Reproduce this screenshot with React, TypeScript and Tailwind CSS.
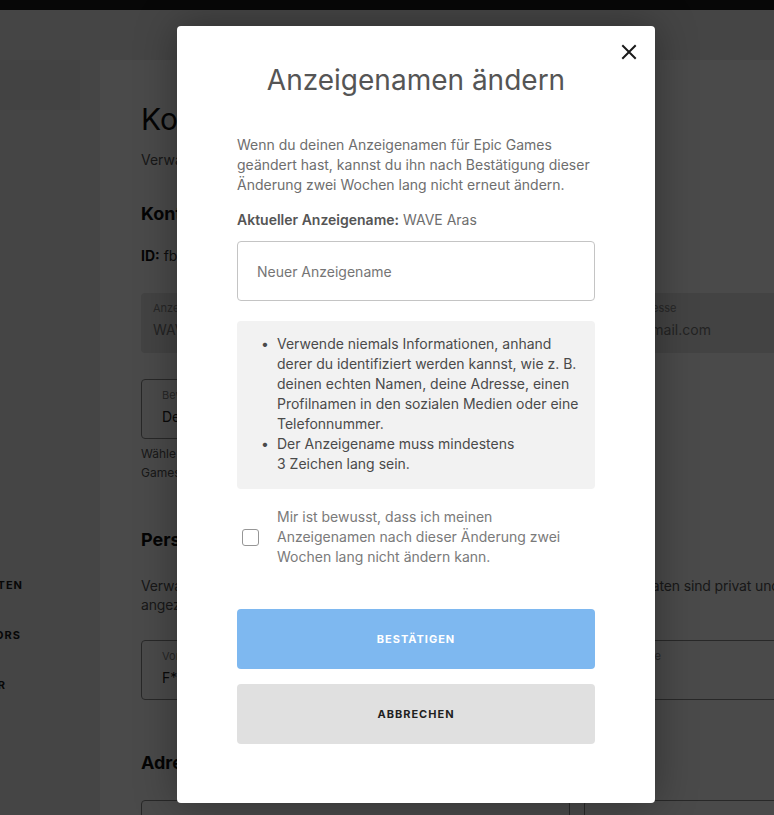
import React from "react";

const font = { fontFamily: "Inter, 'Noto Sans', sans-serif" };

function Field({ label, value, filled, className = "" }: { label: string; value: string; filled?: boolean; className?: string }) {
  return (
    <div
      className={
        "h-[60px] rounded-[4px] pt-[8px] flex flex-col " +
        (filled ? "bg-[#e6e6e6] text-[#7a7a7a] px-[12px] " : "border border-[#8a8a8a] text-[#222] px-[20px] ") +
        className
      }
    >
      {label && <span className="text-[11px] leading-[14px] text-[#888] whitespace-nowrap">{label}</span>}
      {value && <span className="text-[14px] leading-[20px] mt-[5px] whitespace-nowrap">{value}</span>}
    </div>
  );
}

const sideItems: { t: string; w: string }[] = [
  { t: "VERBUNDENE KONTEN", w: "w-[23px]" },
  { t: "SUPPORT-A-CREATORS", w: "w-[21px]" },
  { t: "EPIC-NEWSLETTER", w: "w-[6px]" },
];

export default function App() {
  return (
    <div className="relative w-[774px] h-[815px] overflow-hidden bg-[#ececec]" style={font}>
      {/* underlying page */}
      <div className="h-[10px] bg-[#1a1a1a]" />
      <div className="flex pt-[50px]">
        <aside className="w-[80px] shrink-0 flex flex-col">
          <div className="h-[50px] bg-[#e8e8e8]" />
          <div className="h-[468px]" />
          {sideItems.map((s) => (
            <div key={s.t} className={"h-[50px] flex justify-end overflow-hidden " + s.w}>
              <span className="whitespace-nowrap text-[11px] font-bold tracking-[1px] text-[#1a1a1a] leading-[14px]">{s.t}</span>
            </div>
          ))}
        </aside>
        <main className="ml-[20px] flex-1 bg-white pl-[41px] pt-[41px] min-w-0 overflow-hidden">
          <div className="w-[872px]">
            <h1 className="text-[30px] leading-[36px] text-[#111]">Kontoeinstellungen</h1>
            <p className="mt-[13px] text-[14px] leading-[20px] text-[#555]">Verwalte die Informationen deines Kontos.</p>
            <h2 className="mt-[32px] text-[18px] leading-[24px] font-bold text-[#111]">Kontoinformationen</h2>
            <p className="mt-[20px] text-[14px] leading-[20px] text-[#333]"><b className="text-[#111]">ID:</b> fb3c2a7e41d04b9a</p>
            <div className="mt-[27px] grid grid-cols-[429px_429px] gap-[14px]">
              <Field label="Anzeigename" value="WAVE Aras" filled />
              <Field label="E-Mail-Adresse" value="wa**@gmail.com" filled />
            </div>
            <div className="mt-[26px] w-[429px]">
              <Field label="Bevorzugte Kommunikationssprache" value="Deutsch" />
              <p className="mt-[5px] text-[12px] leading-[19px] text-[#555]">
                Wähle die Sprache, in der du E-Mails von Epic<br />Games erhalten möchtest.
              </p>
            </div>
            <h2 className="mt-[46px] text-[18px] leading-[24px] font-bold text-[#111]">Persönliche Details</h2>
            <p className="mt-[24px] text-[14px] leading-[19px] text-[#555] whitespace-nowrap tracking-[-0.15px]">
              Verwalte deinen Namen und deine Kontaktinformationen. Diese persönlichen Daten sind privat und werden
              <br />
              angezeigt.
            </p>
            <div className="mt-[26px] grid grid-cols-[429px_429px] gap-[14px]">
              <Field label="Vorname" value="F*****" />
              <Field label="Nachname" value="A****" />
            </div>
            <h2 className="mt-[51px] text-[18px] leading-[24px] font-bold text-[#111]">Adresse</h2>
            <div className="mt-[25px] grid grid-cols-[429px_429px] gap-[14px]">
              <Field label="" value="" />
              <Field label="" value="" />
            </div>
          </div>
        </main>
      </div>

      {/* dim overlay */}
      <div className="absolute inset-0 bg-black/[0.71]" />

      {/* modal */}
      <div className="absolute left-[177px] top-[26px] w-[478px] h-[777px] bg-white rounded-[4px] shadow-[0_0_40px_rgba(0,0,0,0.35)] px-[60px] pt-[36px]">
        <button className="absolute right-[18px] top-[18px] w-[16px] h-[16px] flex items-center justify-center" aria-label="Schließen">
          <svg width="16" height="16" viewBox="0 0 16 16">
            <path d="M2 2 L14 14 M14 2 L2 14" stroke="#1a1a1a" strokeWidth="2" strokeLinecap="square" />
          </svg>
        </button>
        <h1 className="text-center text-[28px] leading-[36px] text-[#555] font-normal">Anzeigenamen ändern</h1>
        <p className="mt-[37px] text-[14px] leading-[20px] text-[#6e6e6e]">
          Wenn du deinen Anzeigenamen für Epic Games
          <br />
          geändert hast, kannst du ihn nach Bestätigung dieser
          <br />
          Änderung zwei Wochen lang nicht erneut ändern.
        </p>
        <p className="mt-[15px] text-[14px] leading-[20px] text-[#6e6e6e]">
          <b className="font-semibold text-[#555]">Aktueller Anzeigename:</b> WAVE Aras
        </p>
        <div className="mt-[11px] h-[60px] rounded-[4px] border border-[#c4c4c4] flex items-center px-[19px]">
          <span className="text-[14px] text-[#757575]">Neuer Anzeigename</span>
        </div>
        <div className="mt-[20px] h-[168px] rounded-[4px] bg-[#f2f2f2] pt-[13px] pl-[24px]">
          <ul className="text-[14px] leading-[20px] text-[#4a4a4a]">
            <li className="flex">
              <span className="w-[16px] shrink-0">•</span>
              <span>
                Verwende niemals Informationen, anhand
                <br />
                derer du identifiziert werden kannst, wie z. B.
                <br />
                deinen echten Namen, deine Adresse, einen
                <br />
                Profilnamen in den sozialen Medien oder eine
                <br />
                Telefonnummer.
              </span>
            </li>
            <li className="flex">
              <span className="w-[16px] shrink-0">•</span>
              <span>
                Der Anzeigename muss mindestens
                <br />3 Zeichen lang sein.
              </span>
            </li>
          </ul>
        </div>
        <label className="mt-[18px] flex items-center">
          <span className="ml-[5px] w-[17px] h-[17px] rounded-[3px] border-[1.5px] border-[#969696] shrink-0" />
          <span className="ml-[18px] text-[14px] leading-[20px] text-[#7a7a7a]">
            Mir ist bewusst, dass ich meinen
            <br />
            Anzeigenamen nach dieser Änderung zwei
            <br />
            Wochen lang nicht ändern kann.
          </span>
        </label>
        <button className="mt-[42px] w-full h-[60px] rounded-[4px] bg-[#7eb8f0] text-white text-[11px] font-bold tracking-[1px]">
          BESTÄTIGEN
        </button>
        <button className="mt-[15px] w-full h-[60px] rounded-[4px] bg-[#e0e0e0] text-[#1f1f1f] text-[11px] font-bold tracking-[1px]">
          ABBRECHEN
        </button>
      </div>
    </div>
  );
}
